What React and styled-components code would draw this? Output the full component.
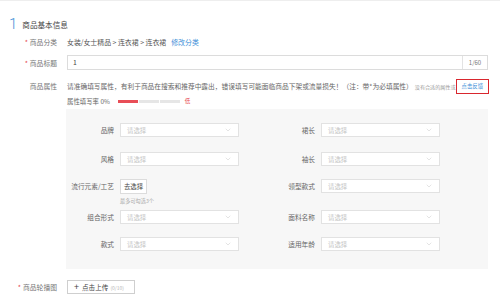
import React from "react"
import styled, { createGlobalStyle } from "styled-components"
import { ChevronDown } from "lucide-react"

const GlobalStyle = createGlobalStyle`
  html, body {
    margin: 0;
    padding: 0;
    background: #fff;
  }
  body {
    font-family: "Noto Sans CJK SC", "Noto Sans", sans-serif;
    color: #333;
  }
`

const Page = styled.div`
  width: 500px;
  height: 294px;
  box-sizing: border-box;
  border-top: 1px solid #eeeeee;
  overflow: hidden;
`

const SectionTitle = styled.div`
  display: flex;
  align-items: center;
  height: 18px;
  margin-top: 14px;
  padding-left: 9px;
`

const StepNumber = styled.span`
  font-family: "Roboto", sans-serif;
  font-weight: 300;
  font-size: 15px;
  line-height: 18px;
  color: #3d8fd8;
  margin-right: 5px;
`

const TitleText = styled.span`
  font-size: 7.6px;
  color: #444;
`

const FormRow = styled.div`
  display: flex;
  align-items: ${(p) => (p.$top ? "flex-start" : "center")};
  margin-top: ${(p) => p.$mt || 0}px;
`

const Label = styled.div`
  width: 57px;
  flex-shrink: 0;
  text-align: right;
  font-size: 6.8px;
  line-height: 14px;
  color: #777;
  margin-right: 10px;
`

const Required = styled.span`
  color: #e4393c;
  margin-right: 2px;
`

const Value = styled.div`
  font-size: 6.9px;
  line-height: 14px;
  color: #555;
`

const Link = styled.span`
  color: #3d8fd8;
  margin-left: 5px;
`

const TitleInput = styled.div`
  display: flex;
  width: 421px;
  height: 15px;
  box-sizing: border-box;
  border: 1px solid #dcdcdc;
  background: #fff;
`

const InputText = styled.div`
  flex: 1;
  padding-left: 5px;
  font-size: 6.8px;
  line-height: 13px;
  color: #444;
`

const Addon = styled.div`
  width: 24px;
  border-left: 1px solid #e3e3e3;
  font-size: 6px;
  line-height: 13px;
  color: #777;
  text-align: center;
`

const AttrContent = styled.div`
  display: flex;
  flex-direction: column;
  width: 421px;
`

const TipLine = styled.div`
  display: flex;
  align-items: center;
  height: 14px;
  white-space: nowrap;
`

const TipText = styled.span`
  font-size: 6.72px;
  color: #666;
`

const TipSmall = styled.span`
  font-size: 5.1px;
  color: #999;
  margin-left: 2px;
`

const FeedbackBox = styled.span`
  display: inline-flex;
  align-items: center;
  height: 15px;
  box-sizing: border-box;
  padding: 0 5px;
  margin-left: auto;
  border: 1.5px solid #d9272e;
  font-size: 5.4px;
  color: #3d8fd8;
`

const RateLine = styled.div`
  display: flex;
  align-items: center;
  height: 14px;
  margin-top: 1px;
`

const RateText = styled.span`
  font-size: 6.4px;
  color: #666;
  margin-right: 8px;
`

const Bar = styled.span`
  display: inline-block;
  width: 20px;
  height: 3px;
  margin-right: 1px;
  background: ${(p) => (p.$active ? "#e84e57" : "#e6e6e6")};
`

const RateLevel = styled.span`
  font-size: 5.6px;
  color: #e84e57;
  margin-left: 4px;
`

const Panel = styled.div`
  width: 422px;
  height: 160px;
  box-sizing: border-box;
  margin-top: 1px;
  margin-left: 66px;
  padding-top: 14px;
  background: #f7f7f7;
`

const PanelRow = styled.div`
  display: flex;
  align-items: flex-start;
  margin-bottom: ${(p) => p.$mb ?? 15}px;
`

const Field = styled.div`
  display: flex;
  align-items: flex-start;
  width: ${(p) => p.$w}px;
`

const FieldLabel = styled.div`
  width: ${(p) => p.$w}px;
  flex-shrink: 0;
  text-align: right;
  font-size: 6.7px;
  line-height: 14px;
  color: #666;
  margin-right: 6px;
`

const Select = styled.div`
  display: flex;
  align-items: center;
  justify-content: space-between;
  width: 119px;
  height: 14px;
  box-sizing: border-box;
  padding: 0 6px 0 6px;
  border: 1px solid #e2e2e2;
  background: #fff;
  font-size: 6.4px;
  color: #c4c4c4;
`

const PickColumn = styled.div`
  display: flex;
  flex-direction: column;
`

const PickButton = styled.div`
  width: 27px;
  height: 15px;
  box-sizing: border-box;
  border: 1px solid #dcdcdc;
  background: #fff;
  font-size: 6.4px;
  line-height: 13px;
  text-align: center;
  color: #444;
`

const Hint = styled.div`
  font-size: 5.2px;
  line-height: 9px;
  color: #aaa;
  margin-top: 2px;
`

const UploadButton = styled.div`
  display: flex;
  align-items: center;
  width: 68px;
  height: 14px;
  box-sizing: border-box;
  padding-left: 6px;
  border: 1px solid #cfcfcf;
  background: #fff;
  font-size: 6.6px;
  color: #444;
`

const Plus = styled.span`
  font-size: 9px;
  margin-right: 3px;
  line-height: 12px;
`

const Count = styled.span`
  font-size: 5px;
  color: #b5b5b5;
  margin-left: 2px;
`

function SelectBox() {
  return (
    <Select>
      <span>请选择</span>
      <ChevronDown size={8} color="#c8c8c8" strokeWidth={1.5} />
    </Select>
  )
}

const rows = [
  { left: "品牌", right: "裙长" },
  { left: "风格", right: "袖长", mb: 13 },
  { left: "流行元素/工艺", right: "领型款式", pick: true, mb: 5 },
  { left: "组合形式", right: "面料名称", mb: 13 },
  { left: "款式", right: "适用年龄" },
]

export default function App() {
  return (
    <Page>
      <GlobalStyle />
      <SectionTitle>
        <StepNumber>1</StepNumber>
        <TitleText>商品基本信息</TitleText>
      </SectionTitle>

      <FormRow $mt={2}>
        <Label>
          <Required>*</Required>商品分类
        </Label>
        <Value>
          女装/女士精品 &gt; 连衣裙 &gt; 连衣裙<Link>修改分类</Link>
        </Value>
      </FormRow>

      <FormRow $mt={6}>
        <Label>
          <Required>*</Required>商品标题
        </Label>
        <TitleInput>
          <InputText>1</InputText>
          <Addon>1/60</Addon>
        </TitleInput>
      </FormRow>

      <FormRow $mt={9} $top>
        <Label>商品属性</Label>
        <AttrContent>
          <TipLine>
            <TipText>
              请准确填写属性，有利于商品在搜索和推荐中露出，错误填写可能面临商品下架或流量损失！（注：带*为必填属性）
            </TipText>
            <TipSmall>没有合适的属性或</TipSmall>
            <FeedbackBox>点击反馈</FeedbackBox>
          </TipLine>
          <RateLine>
            <RateText>属性填写率 0%</RateText>
            <Bar $active />
            <Bar />
            <Bar />
            <RateLevel>低</RateLevel>
          </RateLine>
        </AttrContent>
      </FormRow>

      <Panel>
        {rows.map((r) => (
          <PanelRow key={r.left} $mb={r.mb}>
            <Field $w={201}>
              <FieldLabel $w={48}>{r.left}</FieldLabel>
              {r.pick ? (
                <PickColumn>
                  <PickButton>去选择</PickButton>
                  <Hint>最多可勾选3个</Hint>
                </PickColumn>
              ) : (
                <SelectBox />
              )}
            </Field>
            <Field>
              <FieldLabel $w={48}>{r.right}</FieldLabel>
              <SelectBox />
            </Field>
          </PanelRow>
        ))}
      </Panel>

      <FormRow $mt={11}>
        <Label>
          <Required>*</Required>商品轮播图
        </Label>
        <UploadButton>
          <Plus>+</Plus>点击上传<Count>(0/10)</Count>
        </UploadButton>
      </FormRow>
    </Page>
  )
}
